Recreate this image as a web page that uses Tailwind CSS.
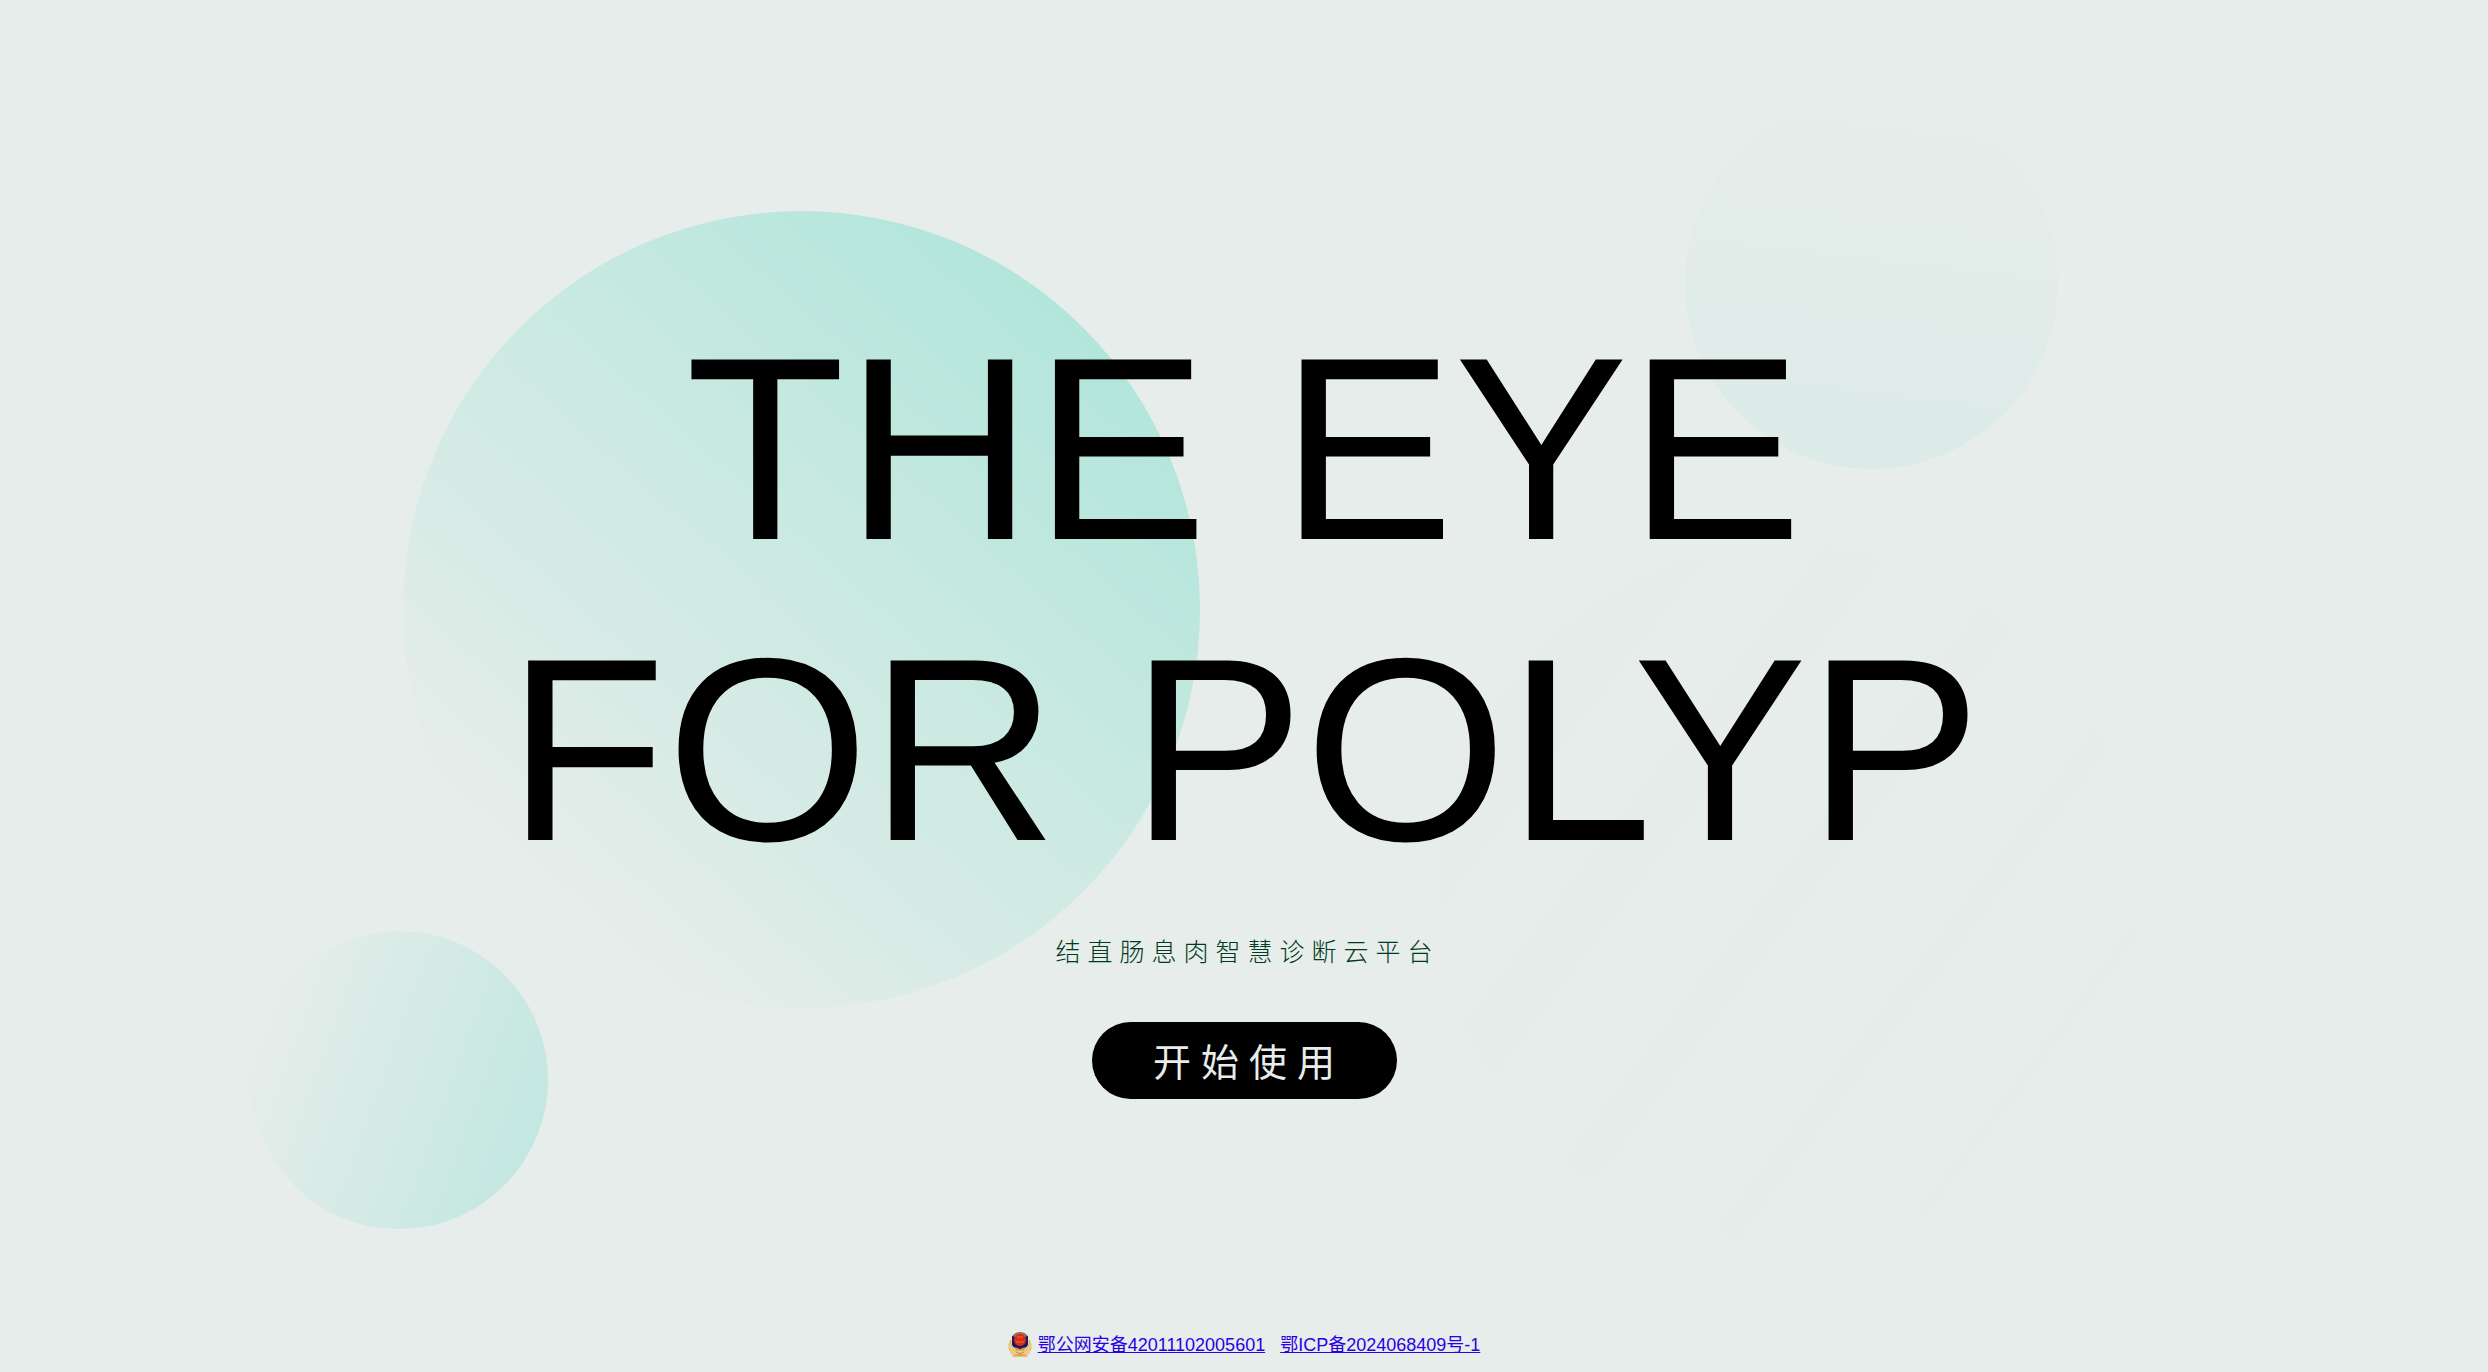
<!DOCTYPE html>
<html lang="zh-CN">
<head>
<meta charset="utf-8">
<meta name="viewport" content="width=device-width, initial-scale=1">
<title>The Eye for Polyp</title>
<script src="https://cdn.jsdelivr.net/npm/@tailwindcss/browser@4"></script>
</head>
<body class="relative flex min-h-screen flex-col overflow-x-hidden bg-[#e6edea] font-['Liberation_Sans','Noto_Sans_CJK_SC',sans-serif] text-black">

  <!-- Decorative circles -->
  <div class="pointer-events-none absolute inset-0 overflow-hidden" aria-hidden="true">
    <div class="absolute top-[211px] left-[403px] size-[797px] rounded-full bg-linear-[42deg,#e6edea_17%,#ace5d9_94%]"></div>
    <div class="absolute top-[931px] left-[250px] size-[298px] rounded-full bg-linear-[110deg,#e6edea_12%,#c0e7e0_95%]"></div>
    <div class="absolute top-[96px] left-[1685px] size-[373px] rounded-full bg-linear-[187deg,#e6edea_8%,#dcebe8_95%]"></div>
    <svg class="absolute top-[543px] left-[1438px] size-[700px]" viewBox="-350 -350 700 700">
      <defs><clipPath id="disc"><circle r="348"/></clipPath></defs>
      <g clip-path="url(#disc)">
        <g transform="rotate(37)" fill="#e5ece9">
          <rect x="-348" y="-350" width="80" height="700"/>
          <rect x="-180" y="-350" width="56" height="700"/>
          <rect x="-18" y="-350" width="38" height="700"/>
          <rect x="145" y="-350" width="24" height="700"/>
          <rect x="295" y="-350" width="10" height="700"/>
        </g>
      </g>
    </svg>
  </div>

  <main class="relative flex grow flex-col items-center pt-[298px]">
    <h1 class="text-center text-[261px] leading-[301px] whitespace-nowrap">THE EYE<br>FOR POLYP</h1>
    <p class="mt-[34px] pl-[7px] text-[25px] leading-9 font-light tracking-[7px] text-[#003a22]">结直肠息肉智慧诊断云平台</p>
    <button type="button" class="mt-[52px] h-[77px] w-[305px] cursor-pointer rounded-full bg-black pt-1 pl-[10px] text-[38px] leading-none tracking-[10px] text-[#e6edea]">开始使用</button>
  </main>

  <footer class="relative flex items-center justify-center pb-[14px] text-[18px] leading-6 text-[#2a00e6]">
    <svg class="mr-[6px] h-[26px] w-6" viewBox="0 0 24 26" aria-hidden="true">
      <path d="M3 7C-1 11 0 20 4 22l1 3h14l1-3c4-2 5-11 1-15l-2 9-7 4-7-4z" fill="#e9bd6c"/>
      <path d="M2 13c1 5 4 8 9 9M22 13c-1 5-4 8-9 9M2 18c2 3 5 5 9 6M22 18c-2 3-5 5-9 6" fill="none" stroke="#f8dfa2" stroke-width="1"/>
      <path d="M12 1l8 3v8c0 3-4 5-8 6-4-1-8-3-8-6V4z" fill="#191a60"/>
      <path d="M12 0c3 0 5 1 7 3l-1 2H6L5 3c2-2 4-3 7-3z" fill="#94705a"/>
      <circle cx="12" cy="8" r="6" fill="#dd2b18"/>
      <path d="M9 5h6M8 10h8" stroke="#f0682c" stroke-width="1"/>
      <path d="M7 15l5 2 5-2-1 3-4 1-4-1z" fill="#e08a44"/>
      <path d="M8 20l4 2 4-2M7 23h10" fill="none" stroke="#c98f3c" stroke-width="1"/>
    </svg>
    <a href="#" class="mr-[15px] underline">鄂公网安备42011102005601</a>
    <a href="#" class="underline">鄂ICP备2024068409号-1</a>
  </footer>
</body>
</html>
